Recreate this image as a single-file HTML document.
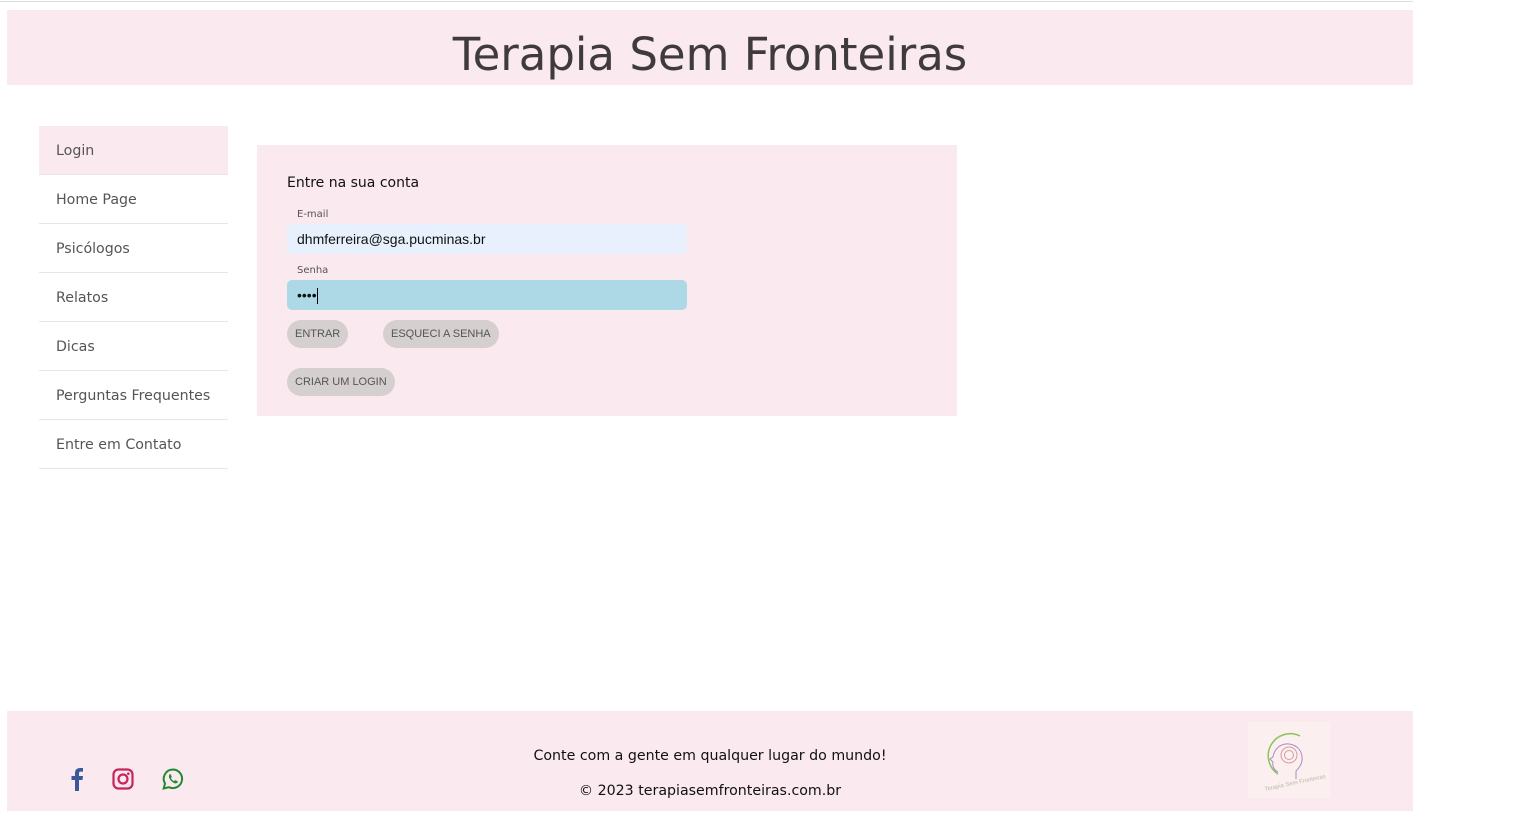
<!DOCTYPE html>
<html><head><meta charset="utf-8"><style>
body{margin:0;width:1527px;height:831px;background:#fff;font-family:"DejaVu Sans","Liberation Sans",sans-serif;position:relative;overflow:hidden}
.topline{position:absolute;left:0;top:1px;width:1413px;height:1px;background:#ddd}
.header{position:absolute;left:7px;top:10px;width:1406px;height:75px;background:#fae9ef;text-align:center;overflow:hidden}
.header h1{margin:0;font-weight:normal;font-size:45px;color:#3f3a3c;line-height:90px;font-family:"DejaVu Sans",sans-serif}
.nav{position:absolute;left:39px;top:126px;width:189px}
.nav div{height:48px;border-bottom:1px solid #e6e6e6;font-size:14.2px;color:#555;line-height:50px;padding-left:17px;font-family:"DejaVu Sans",sans-serif}
.nav div.act{background:#fae9ef}
.card{position:absolute;left:257px;top:145px;width:700px;height:271px;background:#fae9ef}
.t{position:absolute;left:30px;top:30px;font-size:14px;color:#111;font-family:"DejaVu Sans",sans-serif}
.lbl{position:absolute;left:40px;font-size:10px;color:#555}
.inp{position:absolute;left:30px;width:400px;height:30px;border-radius:5px;box-sizing:border-box;padding-left:10px;line-height:30px;font-family:"Liberation Sans",sans-serif;font-size:14px;color:#111}
.btn{position:absolute;height:28px;border-radius:14px;background:#d5cfcf;font-family:"Liberation Sans",sans-serif;font-size:11px;color:#555;line-height:28px;padding:0 8px}
.footer{position:absolute;left:7px;top:711px;width:1406px;height:100px;background:#fae9ef}
.ft{position:absolute;width:1406px;text-align:center;font-size:14.2px;color:#111;font-family:"DejaVu Sans",sans-serif}
</style></head><body>
<div class="topline"></div>
<div class="header"><h1>Terapia Sem Fronteiras</h1></div>
<div class="nav">
<div class="act">Login</div><div>Home Page</div><div>Psicólogos</div><div>Relatos</div><div>Dicas</div><div>Perguntas Frequentes</div><div>Entre em Contato</div>
</div>
<div class="card">
<div class="t">Entre na sua conta</div>
<div class="lbl" style="top:64px">E-mail</div>
<div class="inp" style="top:79px;background:#e8f0fe">dhmferreira@sga.pucminas.br</div>
<div class="lbl" style="top:120px">Senha</div>
<div class="inp" style="top:135px;background:#add8e6">••••<span style="border-left:1px solid #000;height:16px;display:inline-block;vertical-align:middle"></span></div>
<div class="btn" style="left:30px;top:175px">ENTRAR</div>
<div class="btn" style="left:126px;top:175px">ESQUECI A SENHA</div>
<div class="btn" style="left:30px;top:223px">CRIAR UM LOGIN</div>
</div>
<div class="footer">
<svg style="position:absolute;left:63px;top:56px" width="14" height="24" viewBox="0 0 14 24"><path d="M9 24V13h3.5l.5-4H9V6.5C9 5.4 9.3 4.6 10.9 4.6H13V1.1C12.6 1 11.4 1 10 1 7 1 5 2.8 5 6.1V9H1.5v4H5v11z" fill="#3b5998"/></svg>
<svg style="position:absolute;left:105px;top:57px" width="22" height="22" viewBox="0 0 22 22"><rect x="1.5" y="1.5" width="19" height="19" rx="5" fill="none" stroke="#c8245a" stroke-width="2.2"/><circle cx="11" cy="11" r="4.5" fill="none" stroke="#c8245a" stroke-width="2.2"/><circle cx="16.3" cy="5.7" r="1.3" fill="#c8245a"/></svg>
<svg style="position:absolute;left:154px;top:56px" width="24" height="24" viewBox="0 0 24 24"><path d="M12 2.5a9.3 9.3 0 0 0-8 14l-1.3 5 5.1-1.3A9.3 9.3 0 1 0 12 2.5z" fill="none" stroke="#1f8a2e" stroke-width="2"/><path d="M8.5 7.5c.4-.5 1-.5 1.3 0l.9 2c.1.4 0 .7-.3 1l-.5.6c.6 1.3 1.7 2.4 3 3l.6-.5c.3-.3.6-.4 1-.3l2 .9c.5.3.5.9 0 1.3-.8.9-2 1.1-3.2.6-2.3-1-4.2-2.9-5.1-5.2-.4-1.2-.3-2.5.3-3.4z" fill="#1f8a2e"/></svg>
<div class="ft" style="top:37px">Conte com a gente em qualquer lugar do mundo!</div>
<div class="ft" style="top:72px">© 2023 terapiasemfronteiras.com.br</div>
<div style="position:absolute;left:1241px;top:11px;width:82px;height:76px;background:#fcefef">
<svg width="82" height="76" viewBox="0 0 82 76"><path d="M30 52A22 22 0 0 1 52 14" fill="none" stroke="#8ac45a" stroke-width="1.5"/><path d="M30 50c-4-2-6-6-5-10l-3-3 3-2c1-8 8-14 16-13 9 1 14 8 13 17-1 5-4 8-6 10v8" fill="none" stroke="#a98bc6" stroke-width="1"/><circle cx="41" cy="33" r="8" fill="none" stroke="#d69b9b" stroke-width="1"/><circle cx="41" cy="33" r="4.5" fill="none" stroke="#d69b9b" stroke-width="1"/><text x="16" y="64" font-size="6" fill="#bba" font-family="Liberation Sans" transform="rotate(-12 40 62)">Terapia Sem Fronteiras</text></svg>
</div>
</div>
</body></html>
